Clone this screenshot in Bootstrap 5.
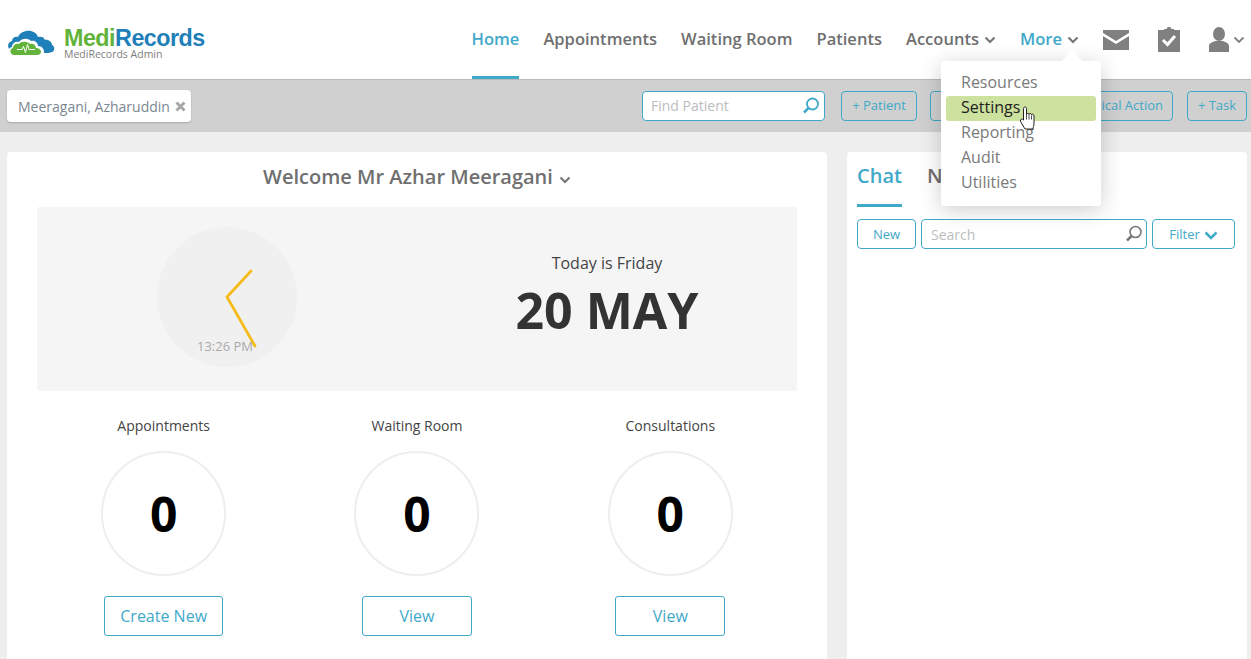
<!DOCTYPE html>
<html lang="en">
<head>
    <meta charset="UTF-8">
    <meta name="viewport" content="width=device-width, initial-scale=1.0">
    <title>MediRecords</title>
    <link href="https://cdn.jsdelivr.net/npm/bootstrap@5.3.0/dist/css/bootstrap.min.css" rel="stylesheet">
    <style>
        html, body {
            height: 659px;
            overflow: hidden;
        }
        body {
            background-color: #eeeeee;
            color: #333333;
            font-family: 'Open Sans', sans-serif;
            font-size: 14px;
        }
        .top-bar {
            height: 80px;
            background-color: #ffffff;
            border-bottom: 1px solid #b8b8b8;
            padding: 0 6px 0 8px;
        }
        .logo-box { width: 200px; padding-top: 6px; }
        .logo-mark { margin-right: 9px; margin-top: 1px; }
        .logo-name {
            font-family: 'Liberation Sans', sans-serif;
            font-weight: 700;
            font-size: 23.3px;
            line-height: 21px;
            padding-top: 1px;
            letter-spacing: -0.5px;
            color: #1f7fb8;
        }
        .logo-name span { color: #62b33a; }
        .logo-sub {
            font-size: 10.5px;
            line-height: 10px;
            color: #7d7d7d;
        }
        .main-link {
            display: flex;
            align-items: center;
            gap: 5px;
            height: 79px;
            font-size: 16.55px;
            font-weight: 600;
            color: #6f6f6f;
            text-decoration: none;
        }
        .main-link.on { color: #3fa9c9; border-bottom: 3px solid #3fa9c9; padding-top: 3px; }
        .main-link.open { color: #3fa9c9; }
        .nav-gap { gap: 24px; }
        .clip-icon { margin: 0 5px; }
        .tool-bar {
            height: 52px;
            background-color: #d0d0d0;
            padding: 0 4px 0 7px;
        }
        .patient-tab {
            height: 32px;
            width: 184px;
            background-color: #ffffff;
            border-radius: 4px;
            box-shadow: 0 1px 2px rgba(0,0,0,.2);
            padding: 0 5px 0 11px;
            font-size: 14px;
            color: #7b8790;
        }
        .find-box {
            width: 183px;
            height: 30px;
            background-color: #ffffff;
            border: 1px solid #3fa9c9;
            border-radius: 4px;
            padding: 0 4px 2px 8px;
            margin-right: 3px;
        }
        .find-box svg { margin-top: 2px; }
        .find-box span, .chat-search span { color: #bdbdbd; font-size: 14px; }
        .tool-btn {
            height: 30px;
            border: 1px solid #3fa9c9;
            border-radius: 4px;
            font-size: 13px;
            color: #3fa9c9;
            background: transparent;
            padding: 0;
        }
        .btn-patient { width: 76px; }
        .btn-clinical { width: 243px; text-align: right; padding-right: 9px; margin-right: 1px; }
        .btn-task { width: 60px; }
        .btn-new { width: 59px; padding-top: 2px; }
        .btn-filter { width: 83px; padding-top: 2px; }
        .tool-row { gap: 13px; }
        .panel-white {
            background-color: #ffffff;
            border-radius: 4px 4px 0 0;
            height: 520px;
        }
        .page-area { padding: 20px 4px 0 7px; gap: 20px; }
        .left-panel { width: 820px; padding: 0 30px; }
        .right-panel { width: 400px; padding: 0 12px 0 10px; }
        .welcome {
            height: 55px;
            padding-bottom: 6px;
            font-size: 20px;
            font-weight: 600;
            color: #6f6f6f;
            gap: 6px;
        }
        .welcome svg { margin-top: 6px; }
        .today-box {
            height: 184px;
            background-color: #f5f5f5;
            border-radius: 3px;
            padding: 20px 0 0 120px;
        }
        .clock-face { width: 140px; height: 140px; display: block; }
        .today-text { width: 340px; margin-left: 140px; padding-top: 25px; text-align: center; }
        .today-day { font-size: 16px; line-height: 22px; color: #444444; }
        .today-date { font-size: 50px; font-weight: 700; line-height: 58px; margin-top: 7px; color: #333333; }
        .stat-row { margin-top: 25px; }
        .stat-col { width: 253.5px; }
        .stat-label { font-size: 14px; line-height: 20px; color: #444444; margin-bottom: 15px; }
        .stat-ring {
            width: 125px;
            height: 125px;
            border: 2px solid #eeeeee;
            border-radius: 50%;
            font-size: 48px;
            font-weight: 700;
            color: #000000;
            margin-bottom: 20px;
        }
        .stat-btn {
            width: 110px;
            height: 40px;
            border: 1px solid #3fa9c9;
            border-radius: 3px;
            background-color: #ffffff;
            color: #3fa9c9;
            font-size: 16px;
            padding: 0;
        }
        .stat-btn.wide { width: 119px; }
        .tab-row { height: 55px; gap: 25px; }
        .tab-item {
            height: 55px;
            font-size: 20px;
            font-weight: 600;
            color: #6f6f6f;
            padding-top: 9px;
        }
        .tab-item.on { color: #3fa9c9; border-bottom: 3px solid #3fa9c9; }
        .chat-tools { margin-top: 12px; gap: 5px; }
        .chat-search {
            width: 226px;
            height: 30px;
            border: 1px solid #3fa9c9;
            border-radius: 4px;
            padding: 0 3px 0 9px;
        }
        .more-menu {
            position: absolute;
            left: 941px;
            top: 61px;
            width: 160px;
            height: 145px;
            background-color: #ffffff;
            border-radius: 3px;
            box-shadow: 0 4px 22px rgba(0,0,0,.2);
            padding: 10px 5px 0;
            z-index: 10;
        }
        .more-menu::before {
            content: "";
            position: absolute;
            left: 121px;
            top: -11px;
            border-left: 10.5px solid transparent;
            border-right: 10.5px solid transparent;
            border-bottom: 11px solid #ffffff;
        }
        .menu-line {
            height: 25px;
            line-height: 22px;
            padding-left: 15px;
            font-size: 16px;
            color: #7a7a7a;
            border-radius: 3px;
        }
        .menu-line.on { background-color: #cde29f; color: #222222; }
        .hand-cursor {
            position: absolute;
            left: 1020px;
            top: 106px;
            z-index: 11;
        }
    </style>
</head>
<body>
    <header class="top-bar d-flex align-items-center justify-content-between">
        <div class="d-flex align-items-center logo-box">
            <svg class="logo-mark flex-shrink-0" width="47" height="26" viewBox="0 0 47 26">
                <path d="M3 20C-1 19-1 12 4 11c0-3 3-5 6-4 2-5 8-7 13-6 4 1 6 3 7 6 3-1 6 0 7 3 3-1 7 2 7 5 3 1 3 6 0 7-2 1-5 1-9 1L8 22z" fill="#1f7fb8"/>
                <path d="M5 26c-5 0-6-8-1-9 0-4 4-6 7-5 3-4 9-4 12-1 3-1 7 1 7 5 4 0 6 3 6 6 0 3-2 4-5 4z" fill="#ffffff"/>
                <path d="M6 25c-4 0-5-6-1-7 0-3 3-5 6-4 2-3 8-3 11 0 3-1 6 1 6 4 3 0 5 2 5 4 0 2-2 3-4 3z" fill="#62b33a"/>
                <path d="M9 19.500h5l1.500-3 2 6 2-8 1.500 5h6" fill="none" stroke="#ffffff" stroke-width="1"/>
            </svg>
            <div>
                <div class="logo-name"><span>Medi</span>Records</div>
                <div class="logo-sub">MediRecords Admin</div>
            </div>
        </div>
        <nav class="d-flex align-items-center nav-gap">
            <a class="main-link on" href="#">Home</a>
            <a class="main-link" href="#">Appointments</a>
            <a class="main-link" href="#">Waiting Room</a>
            <a class="main-link" href="#">Patients</a>
            <a class="main-link" href="#">Accounts
                <svg width="12" height="8" viewBox="0 0 12 8"><path d="M1.500 1.500 6 6l4.500-4.500" fill="none" stroke="#777777" stroke-width="2.200"/></svg></a>
            <a class="main-link open" href="#">More
                <svg width="12" height="8" viewBox="0 0 12 8"><path d="M1.500 1.500 6 6l4.500-4.500" fill="none" stroke="#777777" stroke-width="2.200"/></svg></a>
            <svg width="26" height="20" viewBox="0 0 26 20"><path d="M0 0h26v3L13 11 0 3z" fill="#808080"/><path d="M0 6l13 8 13-8v14H0z" fill="#808080"/></svg>
            <svg class="clip-icon" width="22" height="25" viewBox="0 0 22 25"><path d="M0 3h6V2h2.500a2.500 2 0 0 1 5 0H16v1h6v22H0z" fill="#808080"/><path d="M5 13l4.500 4.500L17 9" fill="none" stroke="#ffffff" stroke-width="3"/></svg>
            <div class="d-flex align-items-center gap-1">
                <svg width="20" height="25" viewBox="0 0 20 25"><ellipse cx="10" cy="7" rx="6" ry="7" fill="#808080"/><path d="M0 25v-6c0-3 4-4 6-5h8c2 1 6 2 6 5v6z" fill="#808080"/></svg>
                <svg width="12" height="8" viewBox="0 0 12 8"><path d="M1.500 1.500 6 6l4.500-4.500" fill="none" stroke="#808080" stroke-width="1.800"/></svg>
            </div>
        </nav>
    </header>

    <div class="tool-bar d-flex align-items-center justify-content-between">
        <div class="patient-tab d-flex align-items-center justify-content-between">
            <span>Meeragani, Azharuddin</span>
            <svg width="11" height="11" viewBox="0 0 11 11"><path d="M1.500 1.500l8 8m0-8l-8 8" stroke="#a8a8a8" stroke-width="3"/></svg>
        </div>
        <div class="d-flex align-items-center tool-row">
            <div class="find-box d-flex align-items-center justify-content-between">
                <span>Find Patient</span>
                <svg width="18" height="18" viewBox="0 0 18 18"><circle cx="10.500" cy="7" r="5.500" fill="none" stroke="#3fa9c9" stroke-width="1.800"/><path d="M6.500 11 2 15.500" stroke="#3fa9c9" stroke-width="2.500"/></svg>
            </div>
            <button class="tool-btn btn-patient">+ Patient</button>
            <button class="tool-btn btn-clinical">Clinical Action</button>
            <button class="tool-btn btn-task">+ Task</button>
        </div>
    </div>

    <main class="d-flex page-area">
        <section class="panel-white left-panel">
            <div class="welcome d-flex align-items-center justify-content-center">
                <span>Welcome Mr Azhar Meeragani</span>
                <svg width="12" height="8" viewBox="0 0 12 8"><path d="M1.500 1.500 6 6l4.500-4.500" fill="none" stroke="#777777" stroke-width="2.200"/></svg>
            </div>
            <div class="today-box d-flex">
                <svg class="clock-face flex-shrink-0" viewBox="0 0 140 140">
                    <circle cx="70" cy="70" r="70" fill="#f0f0f0"/>
                    <path d="M94 44 70 70 98 119" fill="none" stroke="#f5bb1b" stroke-width="2.800" stroke-linecap="round"/>
                    <text x="68" y="123.500" text-anchor="middle" font-family="Open Sans" font-size="13" fill="#aaaaaa">13:26 PM</text>
                </svg>
                <div class="today-text">
                    <div class="today-day">Today is Friday</div>
                    <div class="today-date">20 MAY</div>
                </div>
            </div>
            <div class="d-flex stat-row">
                <div class="stat-col d-flex flex-column align-items-center">
                    <div class="stat-label">Appointments</div>
                    <div class="stat-ring d-flex align-items-center justify-content-center">0</div>
                    <button class="stat-btn wide">Create New</button>
                </div>
                <div class="stat-col d-flex flex-column align-items-center">
                    <div class="stat-label">Waiting Room</div>
                    <div class="stat-ring d-flex align-items-center justify-content-center">0</div>
                    <button class="stat-btn">View</button>
                </div>
                <div class="stat-col d-flex flex-column align-items-center">
                    <div class="stat-label">Consultations</div>
                    <div class="stat-ring d-flex align-items-center justify-content-center">0</div>
                    <button class="stat-btn">View</button>
                </div>
            </div>
        </section>
        <aside class="panel-white right-panel">
            <div class="d-flex tab-row">
                <div class="tab-item on">Chat</div>
                <div class="tab-item">Notes</div>
            </div>
            <div class="d-flex chat-tools">
                <button class="tool-btn btn-new">New</button>
                <div class="chat-search d-flex align-items-center justify-content-between">
                    <span>Search</span>
                    <svg width="18" height="18" viewBox="0 0 18 18"><circle cx="10.500" cy="7" r="5.500" fill="none" stroke="#777777" stroke-width="1.600"/><path d="M6.500 11 2 15.500" stroke="#777777" stroke-width="2.500"/></svg>
                </div>
                <button class="tool-btn btn-filter d-flex align-items-center justify-content-center gap-1">Filter
                    <svg width="14" height="9" viewBox="0 0 14 9"><path d="M1.500 1.500 7 7l5.500-5.500" fill="none" stroke="#3fa9c9" stroke-width="2.500"/></svg>
                </button>
            </div>
        </aside>
    </main>

    <div class="more-menu">
        <div class="menu-line">Resources</div>
        <div class="menu-line on">Settings</div>
        <div class="menu-line">Reporting</div>
        <div class="menu-line">Audit</div>
        <div class="menu-line">Utilities</div>
    </div>
    <svg class="hand-cursor" width="17" height="25" viewBox="0 0 17 24">
        <path d="M3.500 2c0-2 3-2 3 0v6c0-1.500 2.500-1.500 2.500 0 0-1.500 2.500-1.500 2.500 0.500 0-1.500 2.500-1 2.500 1v7c0 3-1 4-1 6H5c-1-2-4-6-4.500-8-.5-2 1.500-2.500 3-1z" fill="#ffffff" stroke="#222222" stroke-width="1"/>
        <path d="M6.500 8v5M9 8.500v4.500M11.500 9v4" stroke="#222222" stroke-width=".8"/>
    </svg>
</body>
</html>
